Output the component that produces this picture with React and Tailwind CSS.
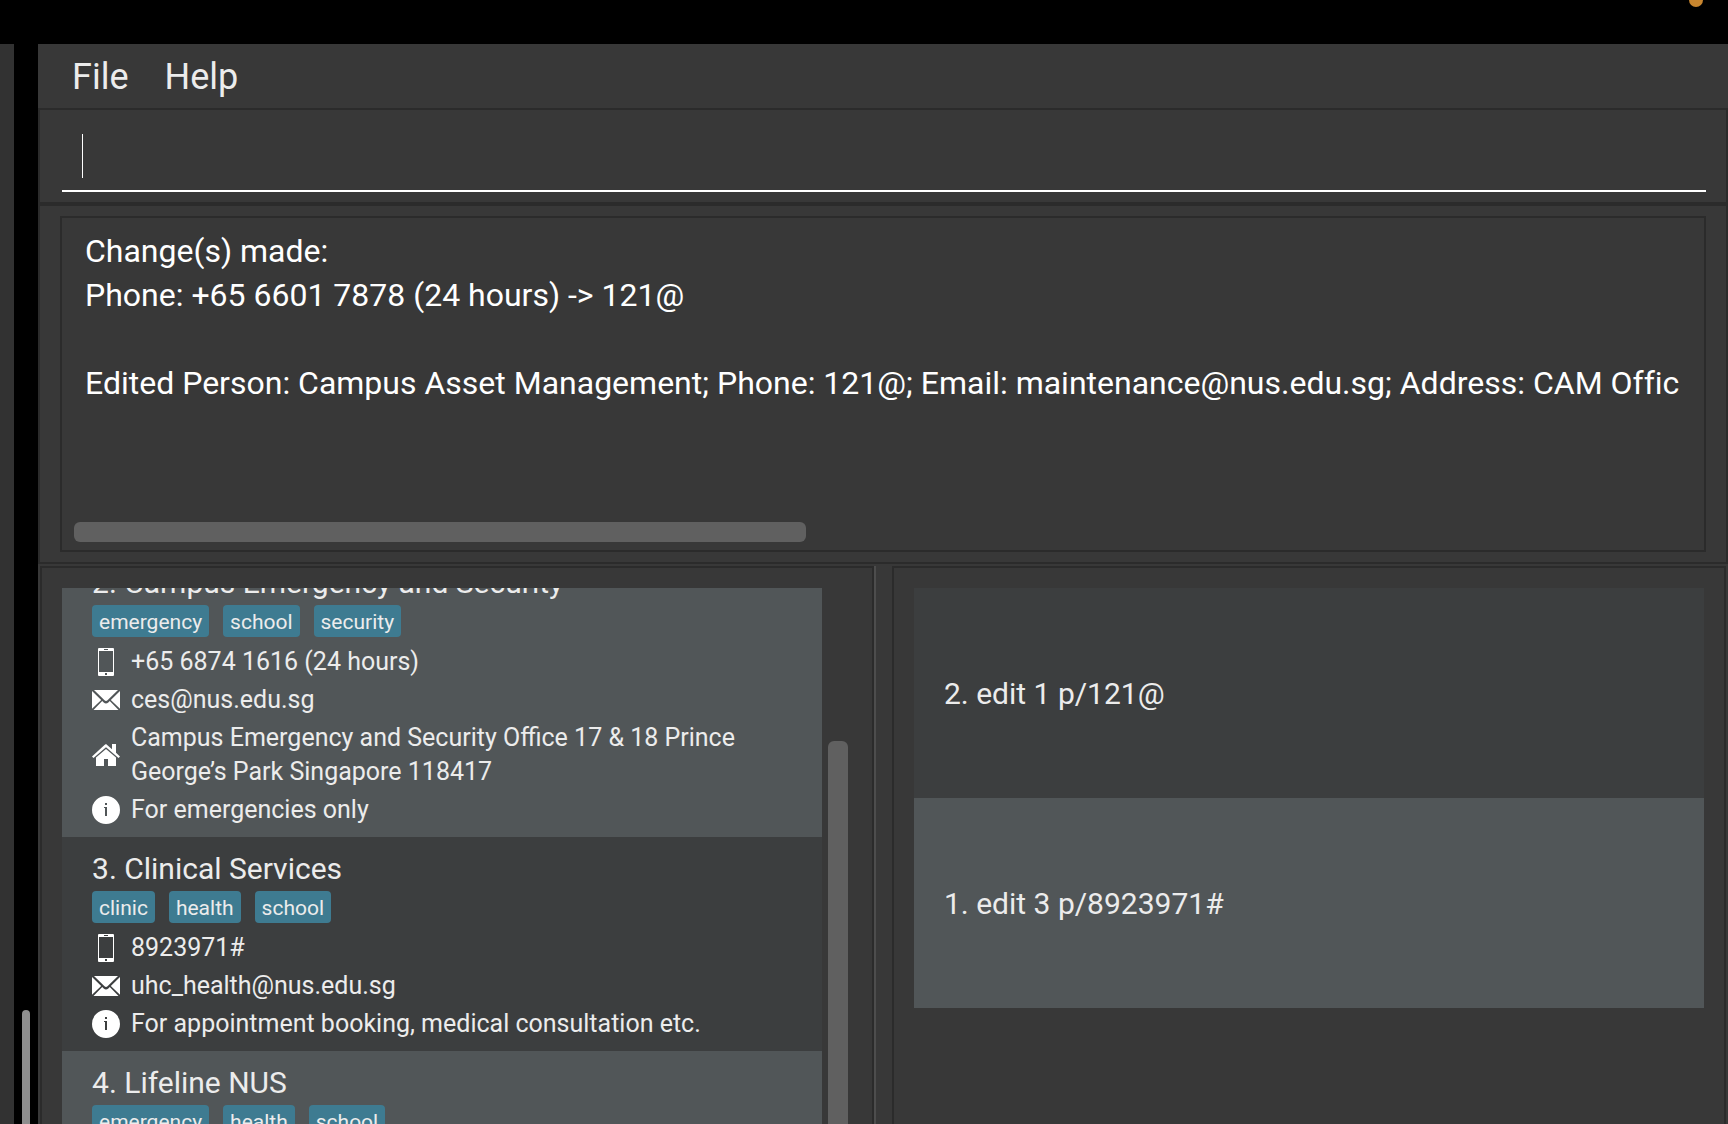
const contacts = [
  {
    id: 2,
    name: "Campus Emergency and Security",
    tags: ["emergency", "school", "security"],
    phone: "+65 6874 1616 (24 hours)",
    email: "ces@nus.edu.sg",
    address: "Campus Emergency and Security Office 17 & 18 Prince George’s Park Singapore 118417",
    note: "For emergencies only",
  },
  {
    id: 3,
    name: "Clinical Services",
    tags: ["clinic", "health", "school"],
    phone: "8923971#",
    email: "uhc_health@nus.edu.sg",
    note: "For appointment booking, medical consultation etc.",
  },
  {
    id: 4,
    name: "Lifeline NUS",
    tags: ["emergency", "health", "school"],
  },
];

const history = ["2. edit 1 p/121@", "1. edit 3 p/8923971#"];

const result = `Change(s) made:
Phone: +65 6601 7878 (24 hours) -> 121@

Edited Person: Campus Asset Management; Phone: 121@; Email: maintenance@nus.edu.sg; Address: CAM Offic`;

function PhoneIcon() {
  return (
    <svg className="size-7 shrink-0" viewBox="0 0 28 28" aria-hidden="true">
      <path
        fill="#fff"
        fillRule="evenodd"
        d="M7 0h14a1 1 0 0 1 1 1v26a1 1 0 0 1-1 1H7a1 1 0 0 1-1-1V1a1 1 0 0 1 1-1zM7 3v21h14V3zM12 1v1h4V1zM13 25v2h2v-2z"
      />
    </svg>
  );
}

function MailIcon() {
  return (
    <svg className="size-7 shrink-0" viewBox="0 0 28 28" aria-hidden="true">
      <path
        fill="#fff"
        d="M2 4h24L15.500 14.200q-1.500 1.400-3 0zM0 5l9.200 9L0 22.800zM28 5l-9.200 9L28 22.800zM10.200 15l1.500 1.500q2.300 1.800 4.600 0l1.500-1.500L26.500 24h-25z"
      />
    </svg>
  );
}

function HomeIcon() {
  return (
    <svg className="size-7 shrink-0" viewBox="0 0 28 28" aria-hidden="true">
      <path
        fill="#fff"
        d="M14 3l6 5.200V3h4v8.800l4 3.700-1.500 1.500L14 6.200 1.500 17 0 15.500 12.500 4zM14 8l10 8.500V25h-8v-7h-4v7H4v-8.500z"
      />
    </svg>
  );
}

function InfoIcon() {
  return (
    <svg className="size-7 shrink-0" viewBox="0 0 28 28" aria-hidden="true">
      <path
        fill="#fff"
        fillRule="evenodd"
        d="M14 0a14 14 0 1 1 0 28 14 14 0 1 1 0-28zM13 7v2h2V7zM12 11v1h1v8h2v-9z"
      />
    </svg>
  );
}

function Detail({ icon, children }) {
  return (
    <div className="flex items-center gap-[11px] py-0.5">
      {icon}
      <p className="text-[25px] leading-[34px]">{children}</p>
    </div>
  );
}

function ContactCard({ contact }) {
  return (
    <li className="bg-[#3c3e3f] pt-[11px] pr-12 pb-2 pl-[30px] odd:bg-[#515658]">
      <h2 className="mb-px text-[30px] leading-[42px]">
        {contact.id}. {contact.name}
      </h2>
      <ul className="mb-1.5 flex gap-3.5">
        {contact.tags.map((tag) => (
          <li key={tag} className="h-8 rounded-sm bg-[#3e7b91] px-[7px] text-[21px] leading-[34px]">
            {tag}
          </li>
        ))}
      </ul>
      {contact.phone && <Detail icon={<PhoneIcon />}>{contact.phone}</Detail>}
      {contact.email && <Detail icon={<MailIcon />}>{contact.email}</Detail>}
      {contact.address && <Detail icon={<HomeIcon />}>{contact.address}</Detail>}
      {contact.note && <Detail icon={<InfoIcon />}>{contact.note}</Detail>}
    </li>
  );
}

export default function App() {
  return (
    <div className="flex h-screen flex-col overflow-hidden bg-black font-['Roboto',sans-serif] text-[#ececec]">
      <header className="flex h-11 shrink-0 justify-end overflow-hidden pr-[25px]">
        <span className="-mt-[7px] size-3.5 rounded-full bg-[#c8862f]" />
      </header>

      <div className="flex min-h-0 flex-1">
        <div className="w-3.5 shrink-0 bg-[#323232]" />
        <div className="flex w-6 shrink-0 flex-col items-center justify-end">
          <div className="h-[114px] w-2 rounded-t-full bg-[#8e8e8e]" />
        </div>

        <main className="flex min-w-0 flex-1 flex-col bg-[#383838]">
          <nav className="flex h-16 shrink-0 items-center gap-9 pt-0.5 pl-[34px] text-[36px] leading-[44px]">
            <button type="button">File</button>
            <button type="button">Help</button>
          </nav>

          <form className="flex h-24 shrink-0 flex-col border-2 border-[#2b2b2b] pt-[22px] pr-5 pb-2.5 pl-[22px]">
            <div className="flex flex-1 items-start border-b-2 border-white pt-0.5 pl-5">
              <span className="h-11 w-px bg-white" />
              <input
                type="text"
                aria-label="Command"
                className="h-11 min-w-0 flex-1 bg-transparent text-[32px] caret-transparent outline-none"
              />
            </div>
          </form>

          <section className="flex h-[360px] shrink-0 flex-col border-2 border-[#2b2b2b] pt-2.5 pr-5 pb-2.5 pl-5">
            <div className="flex min-w-0 flex-1 flex-col overflow-hidden border-2 border-[#2b2b2b] pt-[11px] pb-2">
              <pre className="flex-1 overflow-hidden pl-[23px] font-['Roboto',sans-serif] text-[32px] leading-[44px] text-white [font-variant-ligatures:none]">
                {result}
              </pre>
              <div className="ml-3 h-5 w-[732px] rounded-md bg-[#606060]" />
            </div>
          </section>

          <div className="mx-0.5 mt-0.5 grid min-h-0 flex-1 grid-cols-[minmax(0,1fr)_18px_minmax(0,1fr)]">
            <section className="flex min-h-0 border-2 border-b-0 border-[#2b2b2b] pt-5 pl-5">
              <div className="min-w-0 flex-1 overflow-hidden">
                <ul className="-mt-[37px]">
                  {contacts.map((contact) => (
                    <ContactCard key={contact.id} contact={contact} />
                  ))}
                </ul>
              </div>
              <div className="mt-[153px] mr-6 ml-1.5 w-5 rounded-t-md bg-[#606060]" />
            </section>

            <div className="border-l-2 border-[#4d4d4d]" />

            <section className="min-h-0 border-2 border-b-0 border-[#2b2b2b] p-5">
              <ul>
                {history.map((entry) => (
                  <li
                    key={entry}
                    className="flex h-[210px] items-center bg-[#3c3e3f] px-[30px] text-[30px] even:bg-[#515658]"
                  >
                    {entry}
                  </li>
                ))}
              </ul>
            </section>
          </div>
        </main>
      </div>
    </div>
  );
}
